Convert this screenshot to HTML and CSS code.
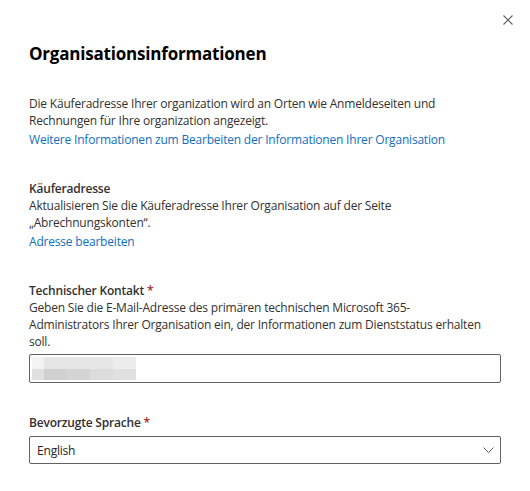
FILE: index.html
```html
<!DOCTYPE html>
<html lang="de">
<head>
<meta charset="utf-8">
<title>Organisationsinformationen</title>
<link rel="stylesheet" href="styles.css">
</head>
<body>
<div class="panel">
  <div class="topbar">
    <button class="close" aria-label="Schließen">
      <svg width="10" height="10" viewBox="0 0 10 10"><path d="M0.5 0.5 L9.5 9.5 M9.5 0.5 L0.5 9.5" stroke="#616161" stroke-width="1.1" fill="none"/></svg>
    </button>
  </div>
  <h1 class="title">Organisationsinformationen</h1>
  <section class="intro">
    <p class="text">Die Käuferadresse Ihrer organization wird an Orten wie Anmeldeseiten und Rechnungen für Ihre organization angezeigt.</p>
    <a class="link" href="#">Weitere Informationen zum Bearbeiten der Informationen Ihrer Organisation</a>
  </section>
  <section class="group address">
    <div class="label">Käuferadresse</div>
    <p class="text">Aktualisieren Sie die Käuferadresse Ihrer Organisation auf der Seite „Abrechnungskonten“.</p>
    <a class="link" href="#">Adresse bearbeiten</a>
  </section>
  <section class="group contact">
    <div class="label">Technischer Kontakt <span class="req">*</span></div>
    <p class="text">Geben Sie die E-Mail-Adresse des primären technischen Microsoft 365-<br>Administrators Ihrer Organisation ein, der Informationen zum Dienststatus erhalten<br>soll.</p>
    <div class="input">
      <div class="blur">
        <div class="row"><span class="c1 t1"></span><span class="c2 t2"></span><span class="c3 t2"></span><span class="c4 t2"></span><span class="c5 t3"></span></div>
        <div class="row"><span class="c1 b1"></span><span class="c2 b2"></span><span class="c3 b3"></span><span class="c4 b4"></span><span class="c5 b1"></span></div>
      </div>
    </div>
  </section>
  <section class="group lang">
    <div class="label">Bevorzugte Sprache <span class="req">*</span></div>
    <div class="select">
      <span class="value">English</span>
      <svg class="chev" width="11" height="6" viewBox="0 0 11 6"><path d="M0.5 0.5 L5.5 5.5 L10.5 0.5" stroke="#616161" stroke-width="1" fill="none"/></svg>
    </div>
  </section>
</div>
</body>
</html>
```
FILE: styles.css
```css
html, body {
  margin: 0;
  padding: 0;
  background: #ffffff;
}
body {
  font-family: "Open Sans", "Liberation Sans", sans-serif;
  font-size: 12px;
  letter-spacing: -0.2px;
  color: #323130;
}
.panel {
  width: 472px;
  padding: 0 0 0 29px;
}
.topbar {
  height: 40px;
  display: flex;
  justify-content: flex-end;
  margin-right: -12px;
}
.close {
  border: none;
  background: none;
  padding: 0;
  margin-top: 15px;
  width: 10px;
  height: 10px;
  display: flex;
}
.title {
  margin: 2px 0 0 0;
  font-size: 17px;
  letter-spacing: -0.2px;
  line-height: 24px;
  font-weight: 700;
  color: #000000;
}
.intro {
  margin-top: 29px;
}
.text {
  margin: 0;
  line-height: 17px;
}
.link {
  display: block;
  margin-top: 2px;
  line-height: 17px;
  color: #0e70c0;
  text-decoration: none;
}
.group {
  margin-top: 32px;
}
.label {
  font-weight: 600;
  line-height: 17px;
}
.req {
  color: #a4262c;
}
.input {
  margin-top: 4px;
  height: 27px;
  border: 1px solid #616161;
  border-radius: 2px;
  display: flex;
  align-items: center;
  padding-left: 2px;
}
.blur {
  display: flex;
  flex-direction: column;
}
.row {
  display: flex;
  height: 11.5px;
}
.row span { display: block; height: 100%; }
.c1 { width: 12px; }
.c2 { width: 23px; }
.c3 { width: 23px; }
.c4 { width: 23px; }
.c5 { width: 23px; }
.t1 { background: #f3f3f3; }
.t2 { background: #e6e6e6; }
.t3 { background: #ececec; }
.b1 { background: #e0e0e0; }
.b2 { background: #d0d0d0; }
.b3 { background: #d4d4d4; }
.b4 { background: #dcdcdc; }
.lang {
  margin-top: 31px;
}
.select {
  margin-top: 5px;
  height: 26px;
  border: 1px solid #616161;
  border-radius: 2px;
  display: flex;
  align-items: center;
  justify-content: space-between;
  padding: 0 6px 0 7px;
}
.value {
  color: #242424;
}
.chev {
  display: block;
}
```
